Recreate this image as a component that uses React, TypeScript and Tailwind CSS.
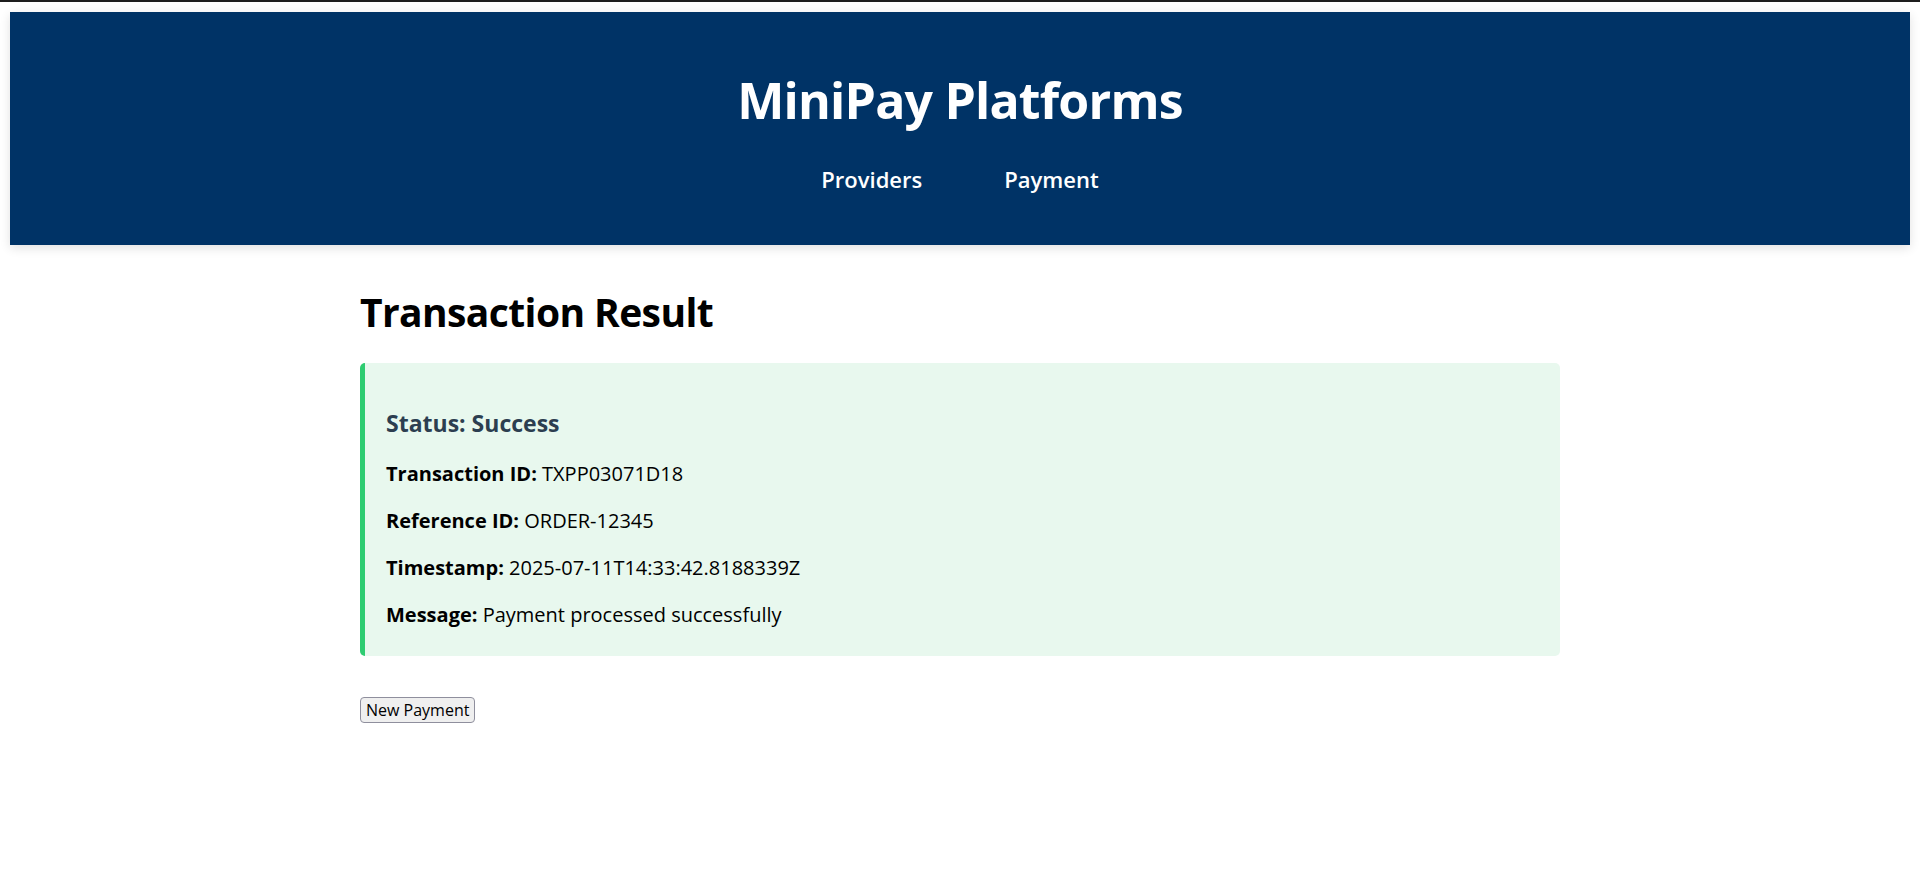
import React from "react";

const details = [
  { label: "Transaction ID:", value: "TXPP03071D18" },
  { label: "Reference ID:", value: "ORDER-12345" },
  { label: "Timestamp:", value: "2025-07-11T14:33:42.8188339Z" },
  { label: "Message:", value: "Payment processed successfully" },
];

function Header() {
  return (
    <header className="bg-[#003366] text-white text-center pt-[56px] pb-[49px] shadow-[0_3px_10px_rgba(0,0,0,0.12)]">
      <h1 className="text-[50px] font-bold leading-[65px] tracking-[-0.8px]">MiniPay Platforms</h1>
      <nav className="flex justify-center gap-[82px] mt-[30px]">
        <a className="text-[22px] font-semibold leading-[33px] cursor-pointer">Providers</a>
        <a className="text-[22px] font-semibold leading-[33px] cursor-pointer">Payment</a>
      </nav>
    </header>
  );
}

function ResultCard() {
  return (
    <div className="bg-[#e8f8ee] border-l-[5px] border-[#2ecc71] rounded-[5px] pl-[21px] pr-5 pt-[45px] pb-[28px]">
      <h3 className="text-[23px] font-bold leading-[31px] text-[#2c3e50]">Status: Success</h3>
      <div className="flex flex-col gap-5 mt-[21px]">
        {details.map((row) => (
          <p key={row.label} className="text-[20px] leading-[27px] text-black">
            <strong className="font-bold">{row.label}</strong> {row.value}
          </p>
        ))}
      </div>
    </div>
  );
}

export default function App() {
  return (
    <div className="min-h-screen bg-white font-['Open_Sans',sans-serif]">
      <div className="h-[2px] bg-[#1e1e1e]" />
      <div className="px-[10px] pt-[10px]">
        <Header />
        <main className="max-w-[1200px] mx-auto pt-[42px]">
          <h2 className="text-[39px] font-bold leading-[50px] tracking-[-0.6px] text-black">Transaction Result</h2>
          <div className="mt-[26px]">
            <ResultCard />
          </div>
          <button className="mt-[41px] h-[26px] px-[5px] bg-[#efefef] border border-[#8f8f9d] rounded-[4px] text-[16px] leading-none text-black font-['Open_Sans',sans-serif]">
            New Payment
          </button>
        </main>
      </div>
    </div>
  );
}
